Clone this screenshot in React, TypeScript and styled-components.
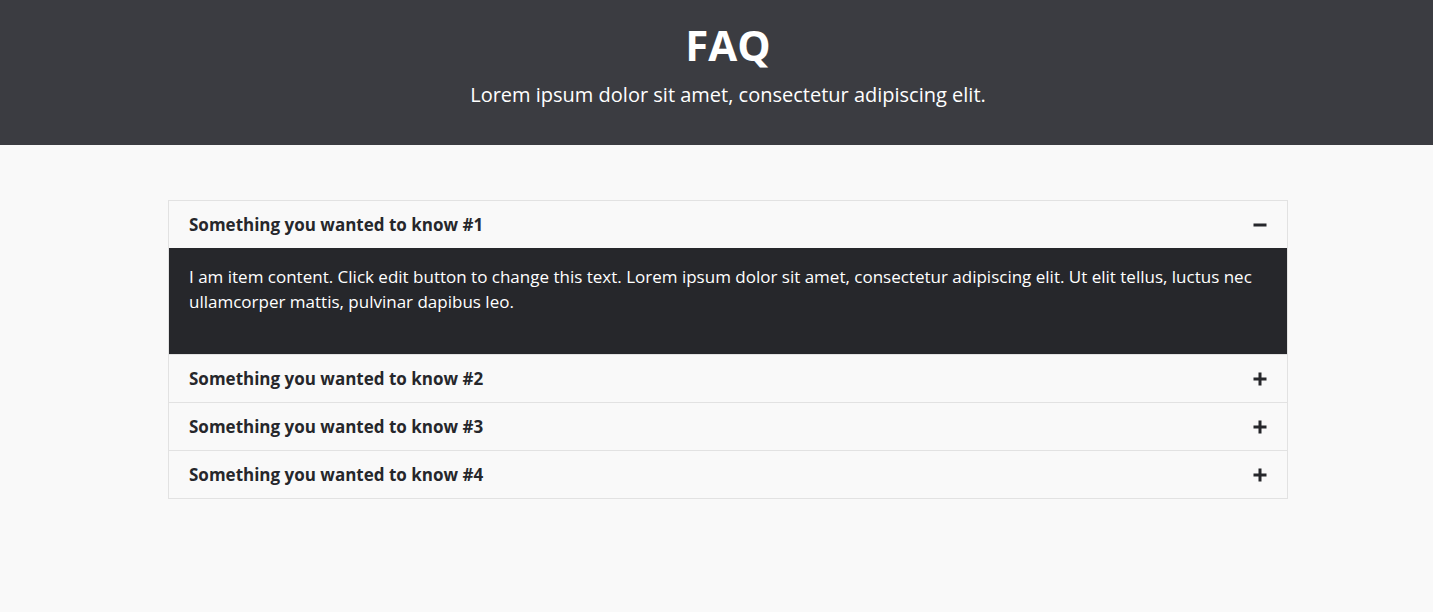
import React, { useState } from "react";
import styled, { createGlobalStyle } from "styled-components";

const Global = createGlobalStyle`
  html, body { margin: 0; padding: 0; }
  body { background: #f9f9f9; font-family: "Open Sans", "Liberation Sans", sans-serif; color: #26272b; }
`;

const Page = styled.div`
  padding-left: 23px;
  background: #f9f9f9;
`;

const HeroBand = styled.div`
  background: #3b3c41;
  margin-left: -23px;
  padding-left: 23px;
`;

const Hero = styled.header`
  height: 145px;
  box-sizing: border-box;
  padding-top: 19px;
  display: flex;
  flex-direction: column;
  align-items: center;
  color: #ffffff;
`;

const Title = styled.h1`
  margin: 0;
  font-size: 42px;
  line-height: 52px;
  font-weight: 700;
`;

const Subtitle = styled.p`
  margin: 10px 0 0;
  font-size: 20px;
  line-height: 28px;
  font-weight: 400;
`;

const Main = styled.main`
  padding: 55px 0 80px;
  display: flex;
  justify-content: center;
`;

const Accordion = styled.div`
  width: 1120px;
  border: 1px solid #e2e2e2;
  border-bottom: none;
  box-sizing: border-box;
`;

const Item = styled.div`
  border-bottom: 1px solid #e2e2e2;
`;

const Head = styled.button`
  all: unset;
  box-sizing: border-box;
  width: 100%;
  height: 47px;
  padding: 0 20px;
  display: flex;
  align-items: center;
  justify-content: space-between;
  background: #f9f9f9;
  cursor: pointer;
  font-family: "Open Sans", "Liberation Sans", sans-serif;
  font-size: 17px;
  font-weight: 700;
  color: #26272b;
`;

const Body = styled.div`
  background: #26272b;
  color: #ffffff;
  padding: 16px 20px 40px;
  font-size: 17px;
  line-height: 25px;
`;

const Icon = styled.svg`
  width: 14px;
  height: 14px;
  display: block;
`;

const Plus = () => (
  <Icon viewBox="0 0 14 14">
    <rect x="5.5" y="0.5" width="3" height="13" fill="#26272b" />
    <rect x="0.5" y="5.5" width="13" height="3" fill="#26272b" />
  </Icon>
);

const Minus = () => (
  <Icon viewBox="0 0 14 14">
    <rect x="0.5" y="5.5" width="13" height="3" fill="#26272b" />
  </Icon>
);

const items = [1, 2, 3, 4].map((n) => `Something you wanted to know #${n}`);

export default function App() {
  const [open, setOpen] = useState(0);
  return (
    <Page>
      <Global />
      <HeroBand>
        <Hero>
          <Title>FAQ</Title>
          <Subtitle>Lorem ipsum dolor sit amet, consectetur adipiscing elit.</Subtitle>
        </Hero>
      </HeroBand>
      <Main>
        <Accordion>
          {items.map((t, i) => (
            <Item key={t}>
              <Head onClick={() => setOpen(open === i ? -1 : i)}>
                <span>{t}</span>
                {open === i ? <Minus /> : <Plus />}
              </Head>
              {open === i && (
                <Body>
                  I am item content. Click edit button to change this text. Lorem ipsum dolor sit amet,
                  consectetur adipiscing elit. Ut elit tellus, luctus nec ullamcorper mattis, pulvinar
                  dapibus leo.
                </Body>
              )}
            </Item>
          ))}
        </Accordion>
      </Main>
    </Page>
  );
}
